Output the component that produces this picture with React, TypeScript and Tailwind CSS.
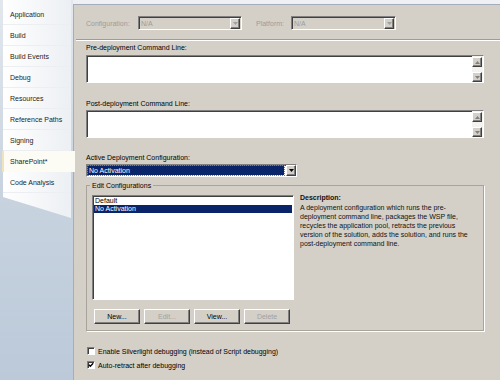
import React from "react";

const tabs = [
  "Application",
  "Build",
  "Build Events",
  "Debug",
  "Resources",
  "Reference Paths",
  "Signing",
  "SharePoint*",
  "Code Analysis",
];

function Tri({ up = false, color = "#808080" }: { up?: boolean; color?: string }) {
  return (
    <svg width="5" height="3" viewBox="0 0 5 3" className="block">
      {up ? <polygon points="0,3 5,3 2.5,0" fill={color} /> : <polygon points="0,0 5,0 2.5,3" fill={color} />}
    </svg>
  );
}

function ScrollBtn({ up = false }: { up?: boolean }) {
  return (
    <div className="w-[10px] h-[10px] flex items-center justify-center bg-[#d4d0c8] border border-t-white border-l-white border-r-[#404040] border-b-[#404040] shadow-[inset_-1px_-1px_0_#808080]">
      <Tri up={up} />
    </div>
  );
}

function TextArea() {
  return (
    <div className="h-[28px] w-[398px] flex bg-white border border-t-[#808080] border-l-[#808080] border-r-white border-b-white shadow-[inset_1px_1px_0_#404040]">
      <div className="flex-1" />
      <div className="w-[11px] flex flex-col justify-between pt-[1px] pb-[0px] pr-[1px] bg-[#f4f3f0]">
        <ScrollBtn up />
        <ScrollBtn />
      </div>
    </div>
  );
}

function DisabledCombo({ w }: { w: string }) {
  return (
    <div className={`${w} h-[14px] flex items-center border border-t-[#808080] border-l-[#808080] border-r-white border-b-white shadow-[inset_1px_1px_0_#404040] bg-[#d4d0c8]`}>
      <span className="flex-1 pl-[2px] text-[#9c9c9c]">N/A</span>
      <div className="w-[10px] h-[11px] mr-[1px] flex items-center justify-center bg-[#d4d0c8] border border-t-white border-l-white border-r-[#404040] border-b-[#404040] shadow-[inset_-1px_-1px_0_#808080]">
        <Tri color="#a0a0a0" />
      </div>
    </div>
  );
}

function Btn({ label, disabled = false }: { label: string; disabled?: boolean }) {
  return (
    <div
      className={`w-[46px] h-[15px] flex items-center justify-center bg-[#d4d0c8] border border-t-white border-l-white border-r-[#404040] border-b-[#404040] shadow-[inset_-1px_-1px_0_#808080] ${
        disabled ? "text-[#a0a0a0]" : "text-black"
      }`}
    >
      {label}
    </div>
  );
}

function Check({ checked = false }: { checked?: boolean }) {
  return (
    <div className="w-[8px] h-[8px] bg-white border border-t-[#808080] border-l-[#808080] border-r-white border-b-white shadow-[inset_1px_1px_0_#404040] flex items-center justify-center">
      {checked && (
        <svg width="6" height="6" viewBox="0 0 6 6" className="block">
          <polyline points="0.8,2.8 2.3,4.3 5.2,1.2" fill="none" stroke="#000" strokeWidth="1.3" />
        </svg>
      )}
    </div>
  );
}

export default function App() {
  return (
    <div className="w-[500px] h-[380px] flex overflow-hidden bg-[#eef0f4] font-['Liberation_Sans',Arial,sans-serif] text-[7px] leading-[9px] text-black">
      <aside className="w-[73px] shrink-0 h-full flex flex-col bg-gradient-to-b from-[#e3e8ee] via-[#c8d3df] to-[#bbc9d9]">
        <div className="ml-[3px] w-[68px] pt-[4px] bg-gradient-to-r from-white to-[#eceff3]">
          {tabs.map((t) =>
            t === "SharePoint*" ? (
              <div
                key={t}
                className="relative z-10 -ml-[1px] w-[73px] h-[21px] flex items-center pl-[6px] bg-[#fcfbf4] border-l-[2px] border-[#efe3bd] text-[#1e1e1e]"
              >
                {t}
              </div>
            ) : (
              <div key={t} className="h-[21px] flex items-center pl-[7px] border-b border-[#eceef1] text-[#1e1e1e]">
                {t}
              </div>
            )
          )}
        </div>
        <div className="ml-[3px] w-[68px] h-[25px] bg-gradient-to-r from-white to-[#eceff3] [clip-path:polygon(0_0,100%_0,100%_100%,0_16%)]" />
      </aside>

      <main className="flex-1 mt-[4px] border-l border-t border-[#a3adbb] bg-[#d4d0c8] flex flex-col">
        <div className="mt-[11px] ml-[12px] h-[14px] flex items-center">
          <span className="w-[52px] text-[#9c9c9c]">Configuration:</span>
          <DisabledCombo w="w-[104px]" />
          <span className="ml-[14px] w-[35px] text-[#9c9c9c]">Platform:</span>
          <DisabledCombo w="w-[105px]" />
        </div>
        <div className="mt-[9px] ml-[2px] border-t border-b border-t-[#a09c94] border-b-white" />

        <div className="px-[12px] flex flex-col">
          <div className="mt-[2px] h-[9px]">Pre-deployment Command Line:</div>
          <div className="mt-[3px]">
            <TextArea />
          </div>
          <div className="mt-[16px] h-[9px]">Post-deployment Command Line:</div>
          <div className="mt-[2px]">
            <TextArea />
          </div>
          <div className="mt-[15px] h-[9px]">Active Deployment Configuration:</div>
          <div className="mt-[2px] w-[211px] h-[13px] flex items-center bg-white border border-t-[#808080] border-l-[#808080] border-r-white border-b-white shadow-[inset_1px_1px_0_#404040]">
            <div className="ml-[1px] flex-1 h-[9px] bg-[#0a246a] text-white pl-[1px] leading-[9px] outline-dotted outline-1 outline-[#6d7fb0]">
              No Activation
            </div>
            <div className="ml-[2px] w-[10px] h-[11px] flex items-center justify-center bg-[#d4d0c8] border border-t-white border-l-white border-r-[#404040] border-b-[#404040] shadow-[inset_-1px_-1px_0_#808080]">
              <Tri color="#000" />
            </div>
          </div>

          <fieldset className="mt-[4px] w-[398px] border border-[#a8a49c] shadow-[1px_1px_0_#ffffff] pl-[3px] pb-[6px] flex flex-col">
            <legend className="px-[2px] leading-[9px]">Edit Configurations</legend>
            <div className="mt-[5px] flex">
              <div className="ml-[2px] w-[202px] h-[105px] bg-white border border-t-[#808080] border-l-[#808080] border-r-white border-b-white shadow-[inset_1px_1px_0_#404040] pt-[1px] pl-[1px] pr-[1px] flex flex-col">
                <div className="h-[8px] leading-[8px] pl-[1px]">Default</div>
                <div className="h-[8px] leading-[8px] pl-[1px] bg-[#0a246a] text-white">No Activation</div>
              </div>
              <div className="ml-[6px] flex flex-col text-[#111]">
                <div className="mt-[-2px] font-bold">Description:</div>
                <div className="mt-[1px] leading-[9px]">
                  A deployment configuration which runs the pre-
                  <br />
                  deployment command line, packages the WSP file,
                  <br />
                  recycles the application pool, retracts the previous
                  <br />
                  version of the solution, adds the solution, and runs the
                  <br />
                  post-deployment command line.
                </div>
              </div>
            </div>
            <div className="mt-[9px] ml-[4px] flex gap-[4px]">
              <Btn label="New..." />
              <Btn label="Edit..." disabled />
              <Btn label="View..." />
              <Btn label="Delete" disabled />
            </div>
          </fieldset>

          <div className="mt-[15px] h-[10px] flex items-center">
            <div className="ml-[1px]">
              <Check />
            </div>
            <span className="ml-[3px]">Enable Silverlight debugging (instead of Script debugging)</span>
          </div>
          <div className="mt-[4px] h-[10px] flex items-center">
            <div className="ml-[1px]">
              <Check checked />
            </div>
            <span className="ml-[3px]">Auto-retract after debugging</span>
          </div>
        </div>
      </main>
    </div>
  );
}
